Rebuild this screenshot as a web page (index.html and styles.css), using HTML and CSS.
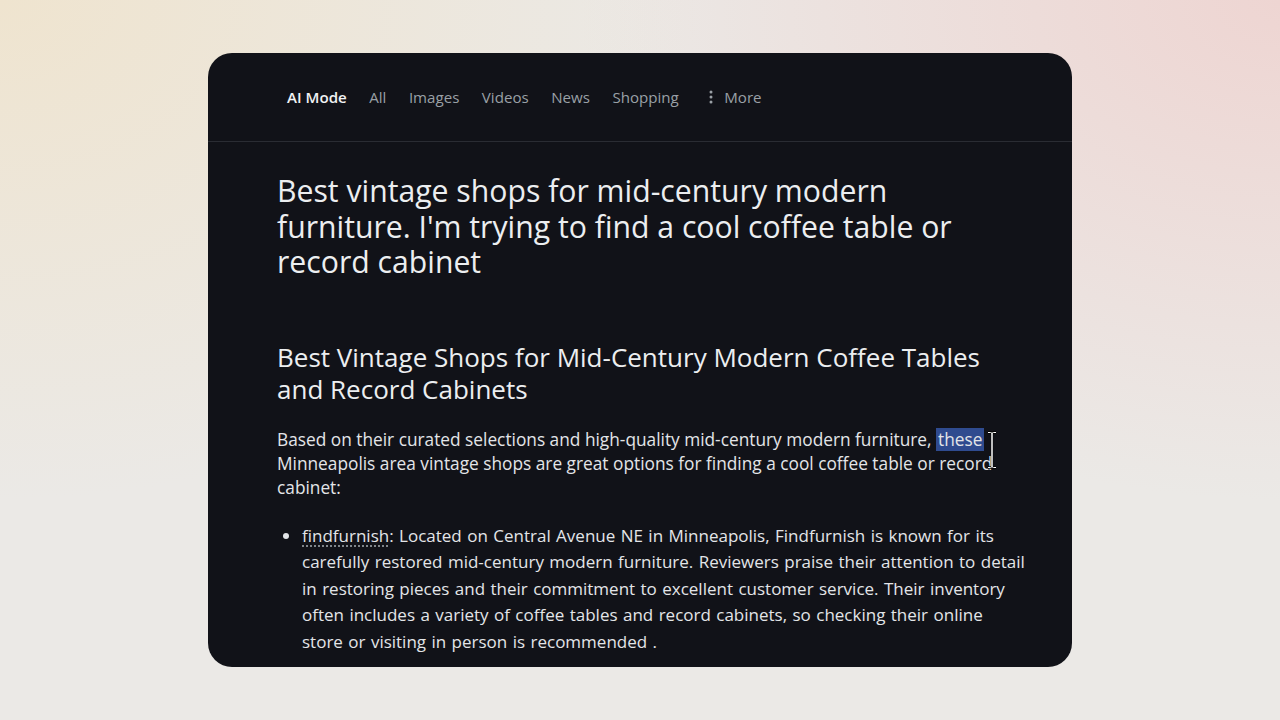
FILE: index.html
```html
<!DOCTYPE html>
<html>
<head>
<meta charset="utf-8">
<link rel="stylesheet" href="styles.css">
</head>
<body>
<div class="stage">
  <div class="card">
    <nav class="tabs">
      <span class="tab active">AI Mode</span>
      <span class="tab">All</span>
      <span class="tab">Images</span>
      <span class="tab">Videos</span>
      <span class="tab">News</span>
      <span class="tab">Shopping</span>
      <span class="tab more"><svg class="dots" width="4" height="14" viewBox="0 0 4 14"><circle cx="2" cy="2" r="1.5"/><circle cx="2" cy="7" r="1.5"/><circle cx="2" cy="12" r="1.5"/></svg>More</span>
    </nav>
    <div class="content">
      <h1 class="query">Best vintage shops for mid-century modern furniture. I'm trying to find a cool coffee table or record cabinet</h1>
      <h2 class="title">Best Vintage Shops for Mid-Century Modern Coffee Tables and Record Cabinets</h2>
      <p class="intro">Based on their curated selections and high-quality mid-century modern furniture, <span class="sel">these</span><span class="caret-wrap"><svg class="caret" width="10" height="38" viewBox="0 0 10 38"><path d="M1 1.5h2.5q1.5 0 1.5 1.5v32q0 1.5-1.5 1.5H1M9 1.5H6.5Q5 1.5 5 3v32q0 1.5 1.5 1.5H9" fill="none" stroke="#000" stroke-width="2.4"/><path d="M1 1.5h2.5q1.5 0 1.5 1.5v32q0 1.5-1.5 1.5H1M9 1.5H6.5Q5 1.5 5 3v32q0 1.5 1.5 1.5H9" fill="none" stroke="#fff" stroke-width="1"/></svg></span> Minneapolis area vintage shops are great options for finding a cool coffee table or record cabinet:</p>
      <ul class="list">
        <li><span class="link">findfurnish</span>: Located on Central Avenue NE in Minneapolis, Findfurnish is known for its carefully restored mid-century modern furniture. Reviewers praise their attention to detail in restoring pieces and their commitment to excellent customer service. Their inventory often includes a variety of coffee tables and record cabinets, so checking their online store or visiting in person is recommended .</li>
      </ul>
    </div>
  </div>
</div>
</body>
</html>
```

FILE: styles.css
```css
html, body {
  margin: 0;
  padding: 0;
}
body {
  width: 1280px;
  height: 720px;
  overflow: hidden;
  background:
    radial-gradient(ellipse 700px 500px at 0% 0%, #efe4cf 0%, rgba(239,228,207,0) 100%),
    radial-gradient(ellipse 700px 500px at 100% 0%, #eed5d2 0%, rgba(238,213,210,0) 100%),
    #ebe9e6;
  font-family: "Open Sans", "Liberation Sans", sans-serif;
}
.stage {
  padding-top: 53px;
  padding-left: 208px;
}
.card {
  width: 864px;
  height: 614px;
  background: #111218;
  border-radius: 24px;
  overflow: hidden;
  color: #e8eaed;
}
.tabs {
  display: flex;
  align-items: center;
  gap: 22.5px;
  height: 88px;
  padding-left: 79px;
  border-bottom: 1px solid #2a2c33;
  font-family: "Open Sans", sans-serif;
  font-size: 15.1px;
  color: #9aa0a6;
}
.tab.active {
  color: #f1f3f4;
  font-weight: 600;
}
.tab.more {
  display: flex;
  align-items: center;
  gap: 11px;
  margin-left: 8px;
}
.dots { fill: #9aa0a6; }
.content {
  padding: 0 40px 0 69px;
}
.query {
  max-width: 680px;
  margin: 31px 0 0;
  font-family: "Open Sans", sans-serif;
  font-weight: 400;
  font-size: 30.2px;
  line-height: 35.5px;
  color: #eceef0;
}
.title {
  max-width: 722px;
  margin: 61px 0 0;
  font-family: "Open Sans", sans-serif;
  font-weight: 400;
  font-size: 26px;
  line-height: 32px;
  color: #eceef0;
}
.intro {
  max-width: 735px;
  margin: 23px 0 0;
  font-family: "Open Sans", sans-serif;
  font-size: 17.3px;
  line-height: 24px;
  color: #e3e5e8;
}
.sel {
  background: #2f4b8f;
  padding: 0 2px;
}
.caret-wrap {
  position: relative;
  display: inline-block;
  width: 0;
}
.caret {
  position: absolute;
  left: 3px;
  top: -15px;
}
.list {
  max-width: 724.5px;
  margin: 23px 0 0;
  padding-left: 25px;
  font-family: "Open Sans", sans-serif;
  font-size: 17px;
  word-spacing: 1px;
  line-height: 26.5px;
  color: #e3e5e8;
}
.link {
  text-decoration-line: underline;
  text-decoration-style: dotted;
  text-decoration-color: #80868b;
  text-decoration-thickness: 2px;
  text-underline-offset: 4px;
}
```
